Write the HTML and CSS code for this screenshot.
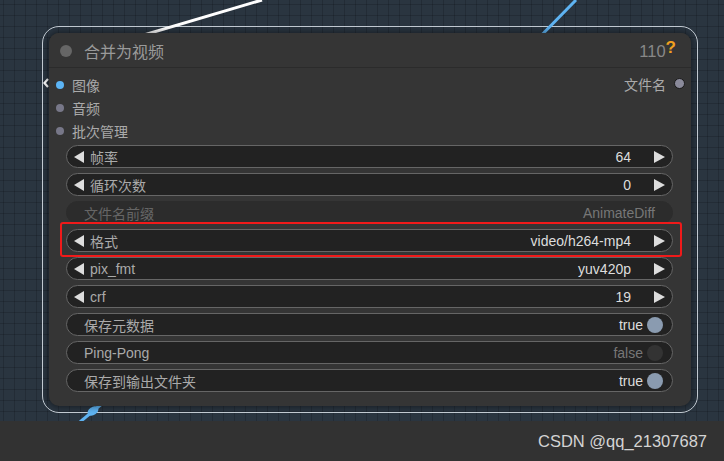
FILE: index.html
```html
<!DOCTYPE html>
<html lang="zh">
<head>
<meta charset="utf-8">
<title>合并为视频</title>
<link rel="stylesheet" href="styles.css">
</head>
<body>
<div class="canvas">
  <svg class="wires" width="724" height="421" viewBox="0 0 724 421">
    <line x1="110" y1="45" x2="262" y2="0" stroke="#ffffff" stroke-width="3"/>
    <line x1="525" y1="52" x2="576" y2="0" stroke="#5eb3f2" stroke-width="3"/>
    <line x1="104" y1="402" x2="80" y2="422" stroke="#5eb3f2" stroke-width="3"/>
    <ellipse cx="93" cy="411" rx="6" ry="4" transform="rotate(-35 93 411)" fill="#5eb3f2"/>
    <polyline points="48,79 44.5,83 48,87" fill="none" stroke="#ffffff" stroke-width="2.2"/>
  </svg>
  <div class="node-frame">
    <div class="node">
      <div class="node-title">
        <span class="title-dot"></span>
        <span class="title-text">合并为视频</span>
        <span class="title-id">110<b class="help">?</b></span>
      </div>
      <div class="slots">
        <div class="slot-row">
          <span class="slot-dot slot-dot-blue"></span>
          <span class="slot-label">图像</span>
          <span class="slot-out">文件名<span class="out-dot"></span></span>
        </div>
        <div class="slot-row">
          <span class="slot-dot"></span>
          <span class="slot-label">音频</span>
        </div>
        <div class="slot-row">
          <span class="slot-dot"></span>
          <span class="slot-label">批次管理</span>
        </div>
      </div>
      <div class="widgets">
        <div class="widget">
          <span class="arrow-left"></span><span class="w-label">帧率</span><span class="w-value">64</span><span class="arrow-right"></span>
        </div>
        <div class="widget">
          <span class="arrow-left"></span><span class="w-label">循环次数</span><span class="w-value">0</span><span class="arrow-right"></span>
        </div>
        <div class="widget widget-disabled">
          <span class="w-label">文件名前缀</span><span class="w-value">AnimateDiff</span>
        </div>
        <div class="widget widget-marked">
          <span class="arrow-left"></span><span class="w-label">格式</span><span class="w-value">video/h264-mp4</span><span class="arrow-right"></span>
          <span class="highlight"></span>
        </div>
        <div class="widget">
          <span class="arrow-left"></span><span class="w-label">pix_fmt</span><span class="w-value">yuv420p</span><span class="arrow-right"></span>
        </div>
        <div class="widget">
          <span class="arrow-left"></span><span class="w-label">crf</span><span class="w-value">19</span><span class="arrow-right"></span>
        </div>
        <div class="widget widget-toggle">
          <span class="w-label">保存元数据</span><span class="w-value">true</span><span class="knob"></span>
        </div>
        <div class="widget widget-toggle widget-off">
          <span class="w-label">Ping-Pong</span><span class="w-value">false</span><span class="knob"></span>
        </div>
        <div class="widget widget-toggle">
          <span class="w-label">保存到输出文件夹</span><span class="w-value">true</span><span class="knob"></span>
        </div>
      </div>
    </div>
  </div>
</div>
<div class="footer">CSDN @qq_21307687</div>
</body>
</html>
```
FILE: styles.css
```css
* { box-sizing: border-box; }
html, body { margin: 0; padding: 0; }
body {
  width: 724px;
  height: 461px;
  overflow: hidden;
  display: flex;
  flex-direction: column;
  font-family: "Liberation Sans", Arial, "Noto Sans CJK SC", sans-serif;
  background: #323232;
}
.canvas {
  position: relative;
  height: 421px;
  flex: none;
  background-color: #2a3540;
  background-image:
    linear-gradient(to right, rgba(0,0,0,0.16) 1px, transparent 1px),
    linear-gradient(to bottom, rgba(0,0,0,0.16) 1px, transparent 1px);
  background-size: 11px 11px;
  background-position: 3px 4px;
}
.wires {
  position: absolute;
  left: 0;
  top: 0;
  z-index: 1;
}
.node-frame {
  position: absolute;
  left: 42px;
  top: 26px;
  padding: 6px;
  border: 1.5px solid rgba(214, 222, 230, 0.9);
  border-radius: 17px;
}
.node {
  position: relative;
  z-index: 2;
  width: 642px;
  height: 373px;
  background: #353535;
  border-radius: 10px;
  box-shadow: 0 0 6px 1px rgba(0, 0, 0, 0.45);
  display: flex;
  flex-direction: column;
}
.node-title {
  height: 35px;
  display: flex;
  align-items: center;
  padding: 1px 15px 0 11px;
  border-bottom: 1px solid #2b2b2b;
  background: #353535;
  border-radius: 10px 10px 0 0;
}
.title-dot {
  width: 12px;
  height: 12px;
  border-radius: 50%;
  background: #666;
  flex: none;
}
.title-text {
  margin-left: 12px;
  font-size: 16px;
  color: #9a9a9a;
  flex: 1;
}
.title-id {
  font-size: 16.5px;
  color: #888;
  position: relative;
  top: 1px;
}
.help {
  color: #f0a020;
  font-weight: bold;
  font-size: 17px;
  position: relative;
  top: -4px;
}
.slots {
  padding: 5px 6px 0 7px;
  display: flex;
  flex-direction: column;
}
.slot-row {
  height: 23px;
  display: flex;
  align-items: center;
}
.slot-dot {
  width: 8px;
  height: 8px;
  border-radius: 50%;
  background: #777788;
  flex: none;
}
.slot-dot-blue { background: #5cb4f5; }
.slot-label {
  margin-left: 8px;
  font-size: 14px;
  color: #aaa;
  flex: 1;
}
.slot-out {
  font-size: 14px;
  color: #aaa;
  display: flex;
  align-items: center;
  position: relative;
  top: -1px;
}
.out-dot {
  width: 11px;
  height: 11px;
  border-radius: 50%;
  background: #8a8a9a;
  border: 1.5px solid #1a1a1a;
  margin-left: 8px;
}
.widgets {
  padding: 3px 18px 0 17px;
  display: flex;
  flex-direction: column;
  gap: 5px;
}
.widget {
  position: relative;
  height: 23px;
  border-radius: 12px;
  background: #222;
  border: 1px solid #666;
  display: flex;
  align-items: center;
  padding: 0 7px 0 7px;
  font-size: 14px;
}
.arrow-left {
  width: 0;
  height: 0;
  border-top: 6px solid transparent;
  border-bottom: 6px solid transparent;
  border-right: 10px solid #ddd;
  flex: none;
}
.arrow-right {
  width: 0;
  height: 0;
  border-top: 6px solid transparent;
  border-bottom: 6px solid transparent;
  border-left: 11px solid #ddd;
  flex: none;
  margin-left: 23px;
}
.w-label {
  margin-left: 6px;
  color: #aaa;
  flex: 1;
}
.w-value {
  color: #ddd;
}
.widget-disabled {
  background: #2c2c2c;
  border-color: #2c2c2c;
  padding: 0 17px 0 17px;
}
.widget-disabled .w-label { margin-left: 0; color: #666; }
.widget-disabled .w-value { color: #777; }
.widget-toggle {
  padding: 0 9px 0 17px;
}
.widget-toggle .w-label { margin-left: 0; }
.knob {
  width: 16px;
  height: 16px;
  border-radius: 50%;
  background: #8a9bb0;
  margin-left: 4px;
  flex: none;
}
.widget-off .w-value { color: #777; }
.widget-off .knob { background: #333; }
.highlight {
  position: absolute;
  left: -7px;
  right: -10px;
  top: -8px;
  bottom: -6px;
  border: 2.5px solid #f01a1a;
  border-radius: 3px;
  pointer-events: none;
}
.footer {
  flex: 1;
  display: flex;
  align-items: center;
  justify-content: flex-end;
  padding: 0 17px 0 0;
  font-size: 16.5px;
  color: #d4d4d4;
  background: #323232;
}
```
